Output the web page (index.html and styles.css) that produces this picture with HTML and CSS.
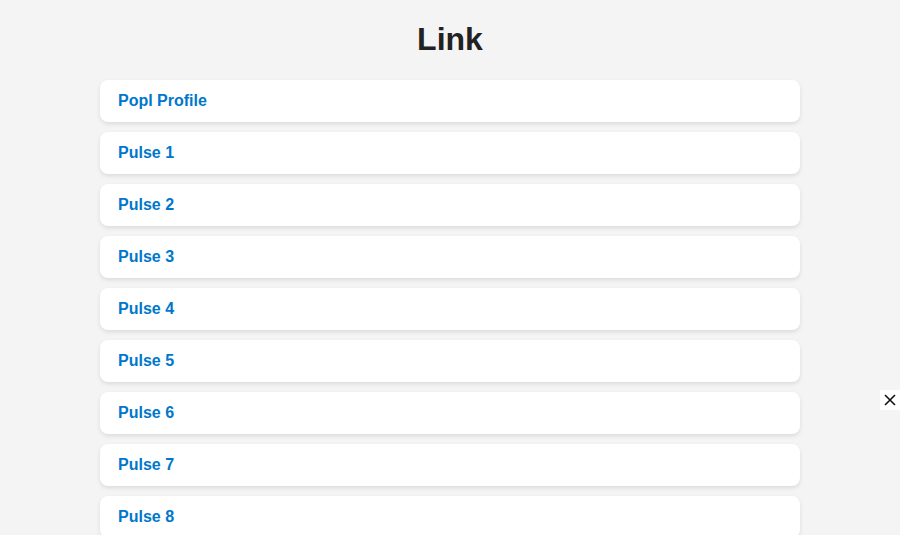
FILE: index.html
```html
<!DOCTYPE html>
<html>
<head>
<meta charset="utf-8">
<link rel="stylesheet" href="styles.css">
</head>
<body>
<main class="page">
  <h1 class="title">Link</h1>
  <ul class="links">
    <li class="link-card"><a class="link" href="#">Popl Profile</a></li>
    <li class="link-card"><a class="link" href="#">Pulse 1</a></li>
    <li class="link-card"><a class="link" href="#">Pulse 2</a></li>
    <li class="link-card"><a class="link" href="#">Pulse 3</a></li>
    <li class="link-card"><a class="link" href="#">Pulse 4</a></li>
    <li class="link-card"><a class="link" href="#">Pulse 5</a></li>
    <li class="link-card"><a class="link" href="#">Pulse 6</a></li>
    <li class="link-card"><a class="link" href="#">Pulse 7</a></li>
    <li class="link-card"><a class="link" href="#">Pulse 8</a></li>
  </ul>
</main>
<button class="close" aria-label="Close">
  <svg width="12" height="12" viewBox="0 0 12 12"><path d="M1 1L11 11M11 1L1 11" stroke="#111" stroke-width="1.6" fill="none"/></svg>
</button>
</body>
</html>
```
FILE: styles.css
```css
html, body {
  margin: 0;
  padding: 0;
  background: #f4f4f4;
  font-family: "Liberation Sans", Arial, sans-serif;
  overflow: hidden;
}
.page {
  width: 700px;
  margin: 0 auto;
  padding-top: 21px;
}
.title {
  margin: 0 0 22px;
  font-size: 32px;
  line-height: 37px;
  font-weight: bold;
  text-align: center;
  color: #222;
}
.links {
  list-style: none;
  margin: 0;
  padding: 0;
  display: flex;
  flex-direction: column;
  gap: 10px;
}
.link-card {
  background: #fff;
  border-radius: 8px;
  box-shadow: 0 2px 4px rgba(0,0,0,0.1);
  padding: 12px 18px;
  height: 18px;
}
.link {
  color: #0077cc;
  font-weight: bold;
  font-size: 16px;
  line-height: 18px;
  text-decoration: none;
}
.close {
  position: fixed;
  right: 0;
  top: 390px;
  width: 20px;
  height: 20px;
  padding: 0;
  border: none;
  background: #fff;
  display: flex;
  align-items: center;
  justify-content: center;
}
```
